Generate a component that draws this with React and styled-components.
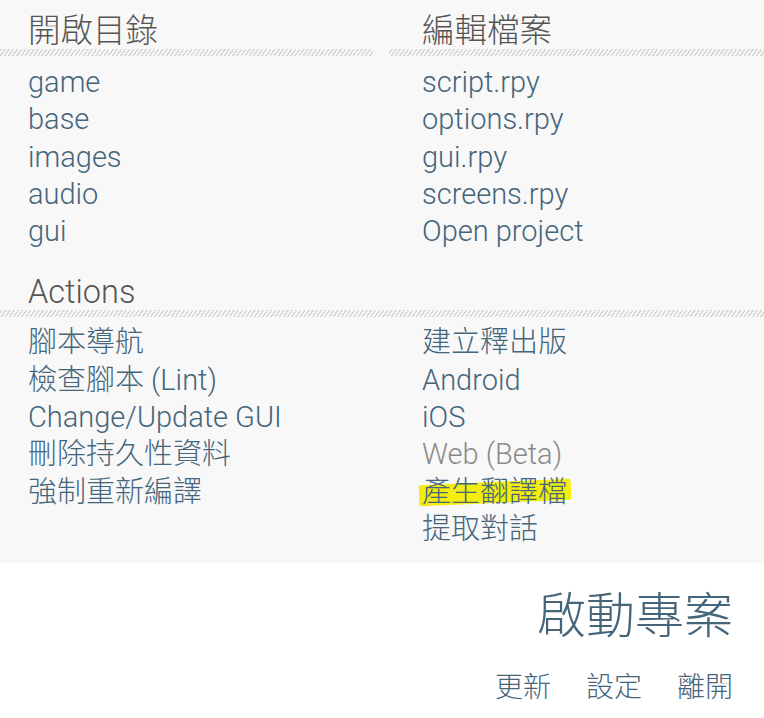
import React from "react";
import styled, { createGlobalStyle } from "styled-components";

const Global = createGlobalStyle`
  html, body { margin: 0; padding: 0; background: #ffffff; }
  body { font-family: Roboto, "Noto Sans CJK TC", sans-serif; font-weight: 300; }
`;

const Page = styled.div`
  width: 764px;
  height: 718px;
  display: flex;
  flex-direction: column;
  background: #ffffff;
  overflow: hidden;
`;

const Panel = styled.div`
  background: #f8f8f8;
  height: 563px;
  padding-top: 13px;
  box-sizing: border-box;
  display: flex;
  flex-direction: column;
`;

const TopGrid = styled.div`
  display: grid;
  grid-template-columns: 373px 375px;
  column-gap: 16px;
`;

const Column = styled.div`
  display: flex;
  flex-direction: column;
`;

const Header = styled.div`
  font-family: Roboto, "Noto Sans CJK TC", sans-serif;
  font-weight: 300;
  font-size: 32.5px;
  line-height: 36px;
  color: #555555;
  padding-left: ${(p) => p.$indent || 28}px;
  height: 36px;
  white-space: nowrap;
`;

const Stripe = styled.div`
  height: 7px;
  background-image: repeating-linear-gradient(
    -55deg,
    #f8f8f8 0px,
    #f8f8f8 2px,
    #d6d6d6 2px,
    #d6d6d6 3.4px
  );
`;

const List = styled.div`
  display: flex;
  flex-direction: column;
  padding-left: ${(p) => p.$indent || 28}px;
  padding-top: ${(p) => p.$top ?? 8}px;
`;

const Item = styled.div`
  font-family: Roboto, "Noto Sans CJK TC", sans-serif;
  font-weight: 300;
  font-size: 29px;
  line-height: 37.3px;
  color: ${(p) => (p.$disabled ? "#8a8a8a" : "#45657b")};
  white-space: nowrap;
  display: flex;
`;

const Marked = styled.span`
  position: relative;
  z-index: 0;
  &::before {
    content: "";
    position: absolute;
    left: -3px;
    right: -4px;
    top: 8px;
    height: 21px;
    background: #f3ec10;
    transform: rotate(-2.5deg);
    border-radius: 2px;
    z-index: -1;
  }
`;

const ActionsSection = styled.div`
  margin-top: 24px;
  display: flex;
  flex-direction: column;
`;

const ActionsGrid = styled.div`
  display: grid;
  grid-template-columns: 394px 1fr;
`;

const Footer = styled.div`
  flex: 1;
  display: flex;
  flex-direction: column;
  align-items: flex-end;
  padding-right: 31px;
`;

const Launch = styled.div`
  font-family: Roboto, "Noto Sans CJK TC", sans-serif;
  font-weight: 300;
  font-size: 49px;
  line-height: 60px;
  color: #45657b;
  margin-top: 24px;
`;

const BottomBar = styled.div`
  display: flex;
  gap: 35px;
  margin-top: 24px;
`;

const BottomButton = styled.div`
  font-family: Roboto, "Noto Sans CJK TC", sans-serif;
  font-weight: 300;
  font-size: 28px;
  line-height: 34px;
  color: #45657b;
`;

export default function App() {
  return (
    <>
      <Global />
      <Page>
        <Panel>
          <TopGrid>
            <Column>
              <Header>開啟目錄</Header>
              <Stripe />
              <List>
                <Item>game</Item>
                <Item>base</Item>
                <Item>images</Item>
                <Item>audio</Item>
                <Item>gui</Item>
              </List>
            </Column>
            <Column>
              <Header $indent={33}>編輯檔案</Header>
              <Stripe />
              <List $indent={33}>
                <Item>script.rpy</Item>
                <Item>options.rpy</Item>
                <Item>gui.rpy</Item>
                <Item>screens.rpy</Item>
                <Item>Open project</Item>
              </List>
            </Column>
          </TopGrid>
          <ActionsSection>
            <Header>Actions</Header>
            <Stripe />
            <ActionsGrid>
              <List $top={7}>
                <Item>腳本導航</Item>
                <Item>檢查腳本 (Lint)</Item>
                <Item>Change/Update GUI</Item>
                <Item>刪除持久性資料</Item>
                <Item>強制重新編譯</Item>
              </List>
              <List $top={7}>
                <Item>建立釋出版</Item>
                <Item>Android</Item>
                <Item>iOS</Item>
                <Item $disabled>Web (Beta)</Item>
                <Item>
                  <Marked>產生翻譯檔</Marked>
                </Item>
                <Item>提取對話</Item>
              </List>
            </ActionsGrid>
          </ActionsSection>
        </Panel>
        <Footer>
          <Launch>啟動專案</Launch>
          <BottomBar>
            <BottomButton>更新</BottomButton>
            <BottomButton>設定</BottomButton>
            <BottomButton>離開</BottomButton>
          </BottomBar>
        </Footer>
      </Page>
    </>
  );
}
